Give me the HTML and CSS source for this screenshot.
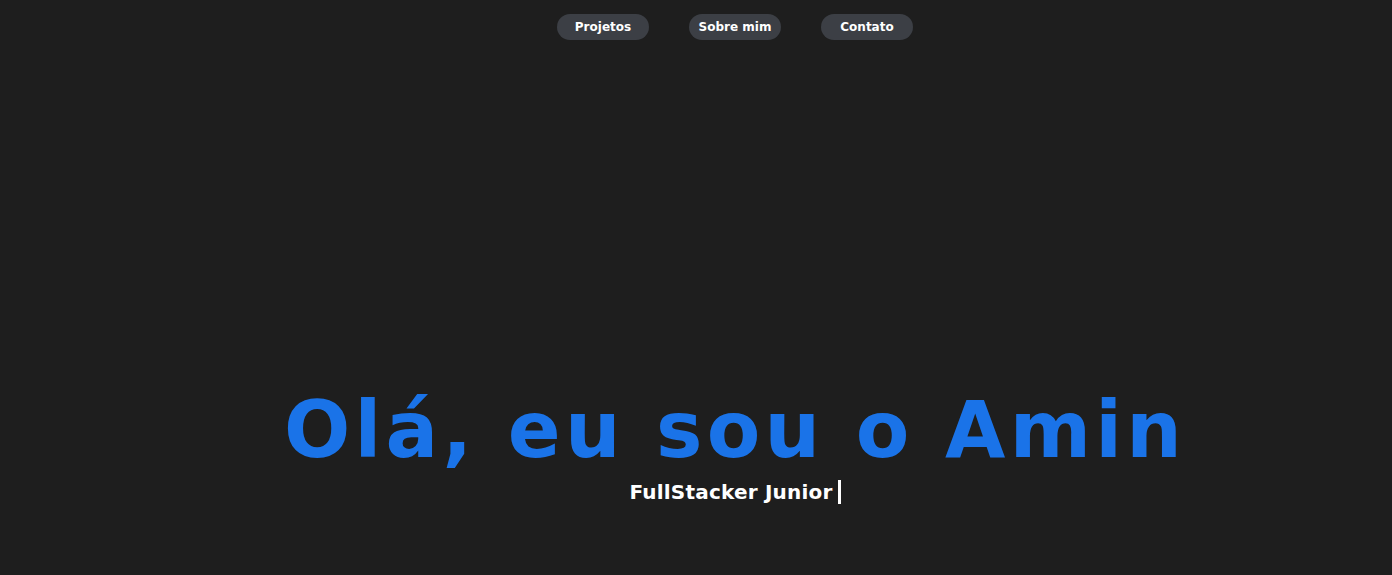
FILE: index.html
```html
<!DOCTYPE html>
<html lang="pt-BR">
<head>
<meta charset="utf-8">
<title>Amin</title>
<link rel="stylesheet" href="styles.css">
</head>
<body>
<div class="page">
  <nav class="nav">
    <a class="nav-btn" href="#projetos">Projetos</a>
    <a class="nav-btn" href="#sobre">Sobre mim</a>
    <a class="nav-btn" href="#contato">Contato</a>
  </nav>
  <header class="hero">
    <h1 class="title">Olá, eu sou o Amin</h1>
    <p class="subtitle">FullStacker Junior<span class="cursor"></span></p>
  </header>
</div>
</body>
</html>
```

FILE: styles.css
```css
html, body {
  margin: 0;
  padding: 0;
  background: #1e1e1e;
  height: 100%;
}
.page {
  font-family: "DejaVu Sans", Verdana, sans-serif;
  padding-left: 78px;
  height: 575px;
  display: flex;
  flex-direction: column;
  align-items: center;
}
.nav {
  display: flex;
  gap: 40px;
  margin-top: 14px;
}
.nav-btn {
  width: 92px;
  height: 26px;
  border-radius: 13px;
  background: #3c3f45;
  color: #fff;
  font-size: 12px;
  font-weight: bold;
  text-decoration: none;
  display: flex;
  align-items: center;
  justify-content: center;
}
.hero {
  margin-top: 351px;
  display: flex;
  flex-direction: column;
  align-items: center;
}
.title {
  margin: 0;
  color: #1a73e8;
  font-size: 78px;
  line-height: 78px;
  letter-spacing: 4.25px;
  font-weight: bold;
}
.subtitle {
  margin: 11px 0 0;
  color: #fff;
  font-size: 20px;
  font-weight: bold;
  line-height: 24px;
  letter-spacing: 0.2px;
  display: flex;
  align-items: center;
}
.cursor {
  display: inline-block;
  width: 3px;
  height: 24px;
  background: #fff;
  margin-left: 5px;
}
```
